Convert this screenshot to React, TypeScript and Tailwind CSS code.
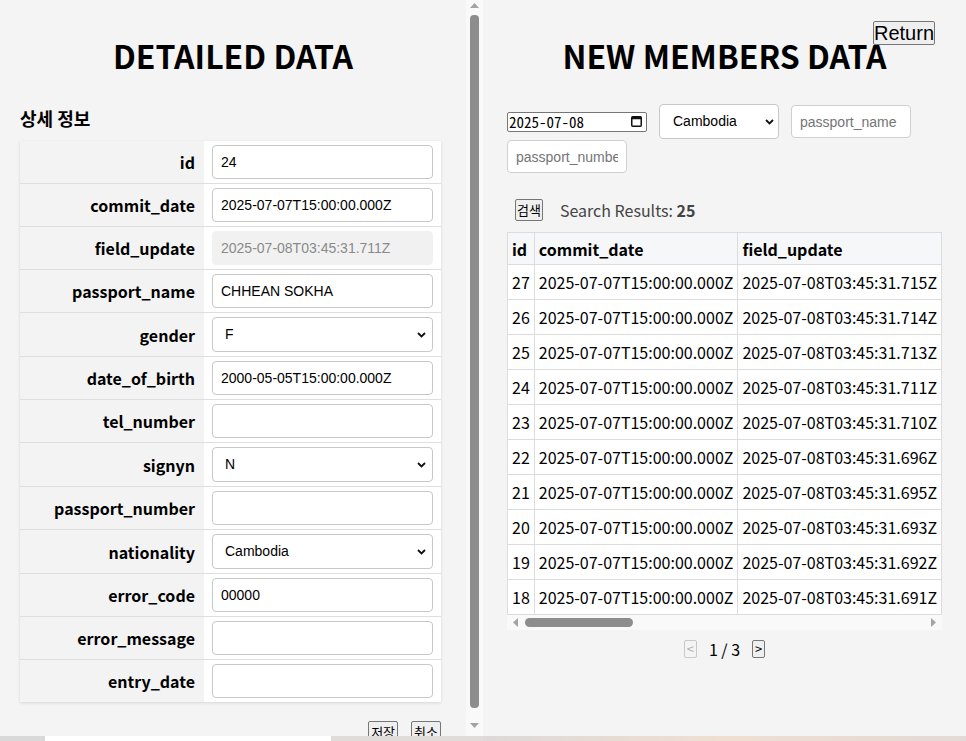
import React from 'react';

const detailRows: { label: string; value: string; kind?: 'select' | 'disabled' }[] = [
  { label: 'id', value: '24' },
  { label: 'commit_date', value: '2025-07-07T15:00:00.000Z' },
  { label: 'field_update', value: '2025-07-08T03:45:31.711Z', kind: 'disabled' },
  { label: 'passport_name', value: 'CHHEAN SOKHA' },
  { label: 'gender', value: 'F', kind: 'select' },
  { label: 'date_of_birth', value: '2000-05-05T15:00:00.000Z' },
  { label: 'tel_number', value: '' },
  { label: 'signyn', value: 'N', kind: 'select' },
  { label: 'passport_number', value: '' },
  { label: 'nationality', value: 'Cambodia', kind: 'select' },
  { label: 'error_code', value: '00000' },
  { label: 'error_message', value: '' },
  { label: 'entry_date', value: '' },
];

const members = [
  { id: 27, upd: '715' },
  { id: 26, upd: '714' },
  { id: 25, upd: '713' },
  { id: 24, upd: '711' },
  { id: 23, upd: '710' },
  { id: 22, upd: '696' },
  { id: 21, upd: '695' },
  { id: 20, upd: '693' },
  { id: 19, upd: '692' },
  { id: 18, upd: '691' },
];

const extraCols = ['passport_name', 'gender', 'date_of_birth', 'tel_number', 'signyn', 'passport_number', 'nationality', 'error_code', 'error_message', 'entry_date'];

const Chevron = () => (
  <svg width="9" height="6" viewBox="0 0 9 6" className="shrink-0">
    <path d="M1 1 L4.5 4.5 L8 1" fill="none" stroke="#111" strokeWidth="1.8" />
  </svg>
);

const FakeSelect = ({ value, className }: { value: string; className: string }) => (
  <div className={`flex items-center justify-between bg-white border border-[#c8c8c8] rounded-[4px] font-['Liberation_Sans',Arial,sans-serif] text-[14px] text-black ${className}`}>
    <span>{value}</span>
    <Chevron />
  </div>
);

const VScrollbar = () => (
  <div className="w-[17px] h-full bg-[#f9f9f9] flex flex-col items-center pt-[3px] pb-[8px]">
    <svg width="9" height="5" viewBox="0 0 9 5"><path d="M0 5 L4.5 0 L9 5 Z" fill="#a3a3a3" /></svg>
    <div className="w-[9px] flex-1 mt-[7px] mb-[15px] bg-[#8d8d8d] rounded-[4px]" />
    <svg width="9" height="5" viewBox="0 0 9 5"><path d="M0 0 L4.5 5 L9 0 Z" fill="#a3a3a3" /></svg>
  </div>
);

const HScrollbar = () => (
  <div className="h-[15px] w-[435px] bg-[#f9f9f9] flex items-center px-[6px]">
    <svg width="5" height="9" viewBox="0 0 5 9"><path d="M5 0 L0 4.5 L5 9 Z" fill="#a3a3a3" /></svg>
    <div className="flex-1 flex items-center pl-[7px]">
      <div className="w-[108px] h-[9px] bg-[#8d8d8d] rounded-full" />
    </div>
    <svg width="5" height="9" viewBox="0 0 5 9"><path d="M0 0 L5 4.5 L0 9 Z" fill="#a3a3a3" /></svg>
  </div>
);

const btn = "bg-[#efefef] border border-[#767676] rounded-[2px] text-black";
const field = "w-full h-[34px] px-[8px] bg-white border border-[#c8c8c8] rounded-[4px] font-['Liberation_Sans',Arial,sans-serif] text-[14px] text-black outline-none";
const cell = "border border-[#dcdcdc] px-[4px]";

export default function App() {
  return (
    <div className="w-[966px] h-[741px] flex flex-col bg-[#f4f4f4] overflow-hidden font-['Noto_Sans_CJK_KR','Noto_Sans',sans-serif]">
      <div className="flex h-[736px]">
        {/* left: detail panel */}
        <div className="flex h-full">
          <div className="w-[466px] h-full overflow-hidden">
            <div className="px-[20px] pt-[35px]">
              <h1 className="text-center text-[32px] font-bold leading-[40px] text-black">DETAILED DATA</h1>
              <h3 className="mt-[31px] text-[18px] font-bold leading-[24px] text-black">상세 정보</h3>
              <div className="mt-[11px] w-[421px] bg-white shadow-[0_1px_3px_rgba(0,0,0,0.12)]">
                {detailRows.map((r, i) => (
                  <div key={r.label} className={`flex ${i < detailRows.length - 1 ? 'border-b border-[#dedede]' : ''}`}>
                    <div className="w-[184px] bg-[#f3f3f3] flex items-center justify-end pr-[9px] text-[16px] font-bold text-black">
                      {r.label}
                    </div>
                    <div className="flex-1 bg-white py-[4px] px-[8px]">
                      {r.kind === 'select' ? (
                        <FakeSelect value={r.value} className="h-[35px] pl-[12px] pr-[6px]" />
                      ) : r.kind === 'disabled' ? (
                        <input readOnly disabled value={r.value} className="w-full h-[34px] px-[8px] bg-[#f1f1f1] border border-[#f1f1f1] rounded-[4px] font-['Liberation_Sans',Arial,sans-serif] text-[14px] text-[#8a8a8a]" />
                      ) : (
                        <input readOnly value={r.value} className={field} />
                      )}
                    </div>
                  </div>
                ))}
              </div>
              <div className="w-[421px] flex justify-end gap-[13px] mt-[19px]">
                <button className={`${btn} text-[13px] leading-[18px] px-[2px] py-[1px]`}>저장</button>
                <button className={`${btn} text-[13px] leading-[18px] px-[2px] py-[1px]`}>취소</button>
              </div>
            </div>
          </div>
          <VScrollbar />
        </div>

        {/* right: members list */}
        <div className="relative w-[483px] h-full px-[24px] pt-[35px]">
          <button className={`absolute top-[21px] right-[31px] ${btn} font-['Liberation_Sans',Arial,sans-serif] text-[20px] leading-[22px] px-0`}>Return</button>
          <h1 className="text-center text-[32px] font-bold leading-[40px] text-black">NEW MEMBERS DATA</h1>
          <div className="mt-[29px] flex flex-wrap items-center gap-x-[12px] gap-y-[1px]">
            <div className="w-[140px] h-[20px] flex items-center justify-between bg-white border border-[#767676] rounded-[2px] pl-[1px] pr-[4px]">
              <span className="font-['Noto_Sans_Mono_CJK_KR','Liberation_Mono',monospace] text-[15px] leading-[18px] text-black">2025-07-08</span>
              <svg width="11" height="11" viewBox="0 0 11 11">
                <rect x="0.75" y="0.75" width="9.5" height="9.5" rx="1" fill="none" stroke="#111" strokeWidth="1.5" />
                <rect x="0.75" y="0.75" width="9.5" height="2.5" fill="#111" />
              </svg>
            </div>
            <FakeSelect value="Cambodia" className="w-[120px] h-[35px] pl-[13px] pr-[4px]" />
            <input readOnly placeholder="passport_name" className="w-[120px] h-[33px] px-[8px] bg-white border border-[#d0d0d0] rounded-[4px] font-['Liberation_Sans',Arial,sans-serif] text-[14px] placeholder:text-[#757575] outline-none" />
            <input readOnly placeholder="passport_number" className="w-[120px] h-[33px] px-[8px] bg-white border border-[#d0d0d0] rounded-[4px] font-['Liberation_Sans',Arial,sans-serif] text-[14px] placeholder:text-[#757575] outline-none" />
          </div>
          <div className="mt-[26px] flex items-center gap-[17px] pl-[8px]">
            <button className={`${btn} text-[13px] leading-[18px] px-[1px] py-[1px]`}>검색</button>
            <span className="text-[16px] text-[#444] leading-[22px]">
              Search Results: <b className="font-bold">25</b>
            </span>
          </div>
          <div className="mt-[11px] w-[435px] overflow-hidden">
            <table className="border-collapse whitespace-nowrap text-[16px] text-black">
              <thead>
                <tr className="bg-[#f6f7f9]">
                  {['id', 'commit_date', 'field_update', ...extraCols].map((c) => (
                    <th key={c} className={`${cell} h-[32px] text-left font-bold`}>{c}</th>
                  ))}
                </tr>
              </thead>
              <tbody>
                {members.map((m) => (
                  <tr key={m.id} className="bg-white">
                    <td className={`${cell} h-[35px]`}>{m.id}</td>
                    <td className={cell}>2025-07-07T15:00:00.000Z</td>
                    <td className={cell}>2025-07-08T03:45:31.{m.upd}Z</td>
                    <td className={cell}>CHHEAN SOKHA</td>
                    <td className={cell}>F</td>
                    <td className={cell}>2000-05-05T15:00:00.000Z</td>
                    <td className={cell}></td>
                    <td className={cell}>N</td>
                    <td className={cell}></td>
                    <td className={cell}>Cambodia</td>
                    <td className={cell}>00000</td>
                    <td className={cell}></td>
                    <td className={cell}></td>
                  </tr>
                ))}
              </tbody>
            </table>
          </div>
          <HScrollbar />
          <div className="mt-[8px] flex justify-center items-center gap-[12px]">
            <button disabled className="bg-[#f4f4f4] border border-[#c8c8c8] rounded-[2px] text-[#b0b0b0] text-[13px] leading-[16px] px-[2px]">&lt;</button>
            <span className="text-[16px] leading-[22px] text-black">1 / 3</span>
            <button className={`${btn} text-[13px] leading-[16px] px-[2px]`}>&gt;</button>
          </div>
        </div>
      </div>
      <div className="h-[5px] flex">
        <div className="w-[45px] bg-[#d9d9d9]" />
        <div className="w-[286px] bg-white" />
        <div className="w-[152px] bg-[#e0dcda]" />
        <div className="flex-1 bg-gradient-to-r from-[#ddd9d8] via-[#efdfd2] to-[#e3d9d6]" />
      </div>
    </div>
  );
}
